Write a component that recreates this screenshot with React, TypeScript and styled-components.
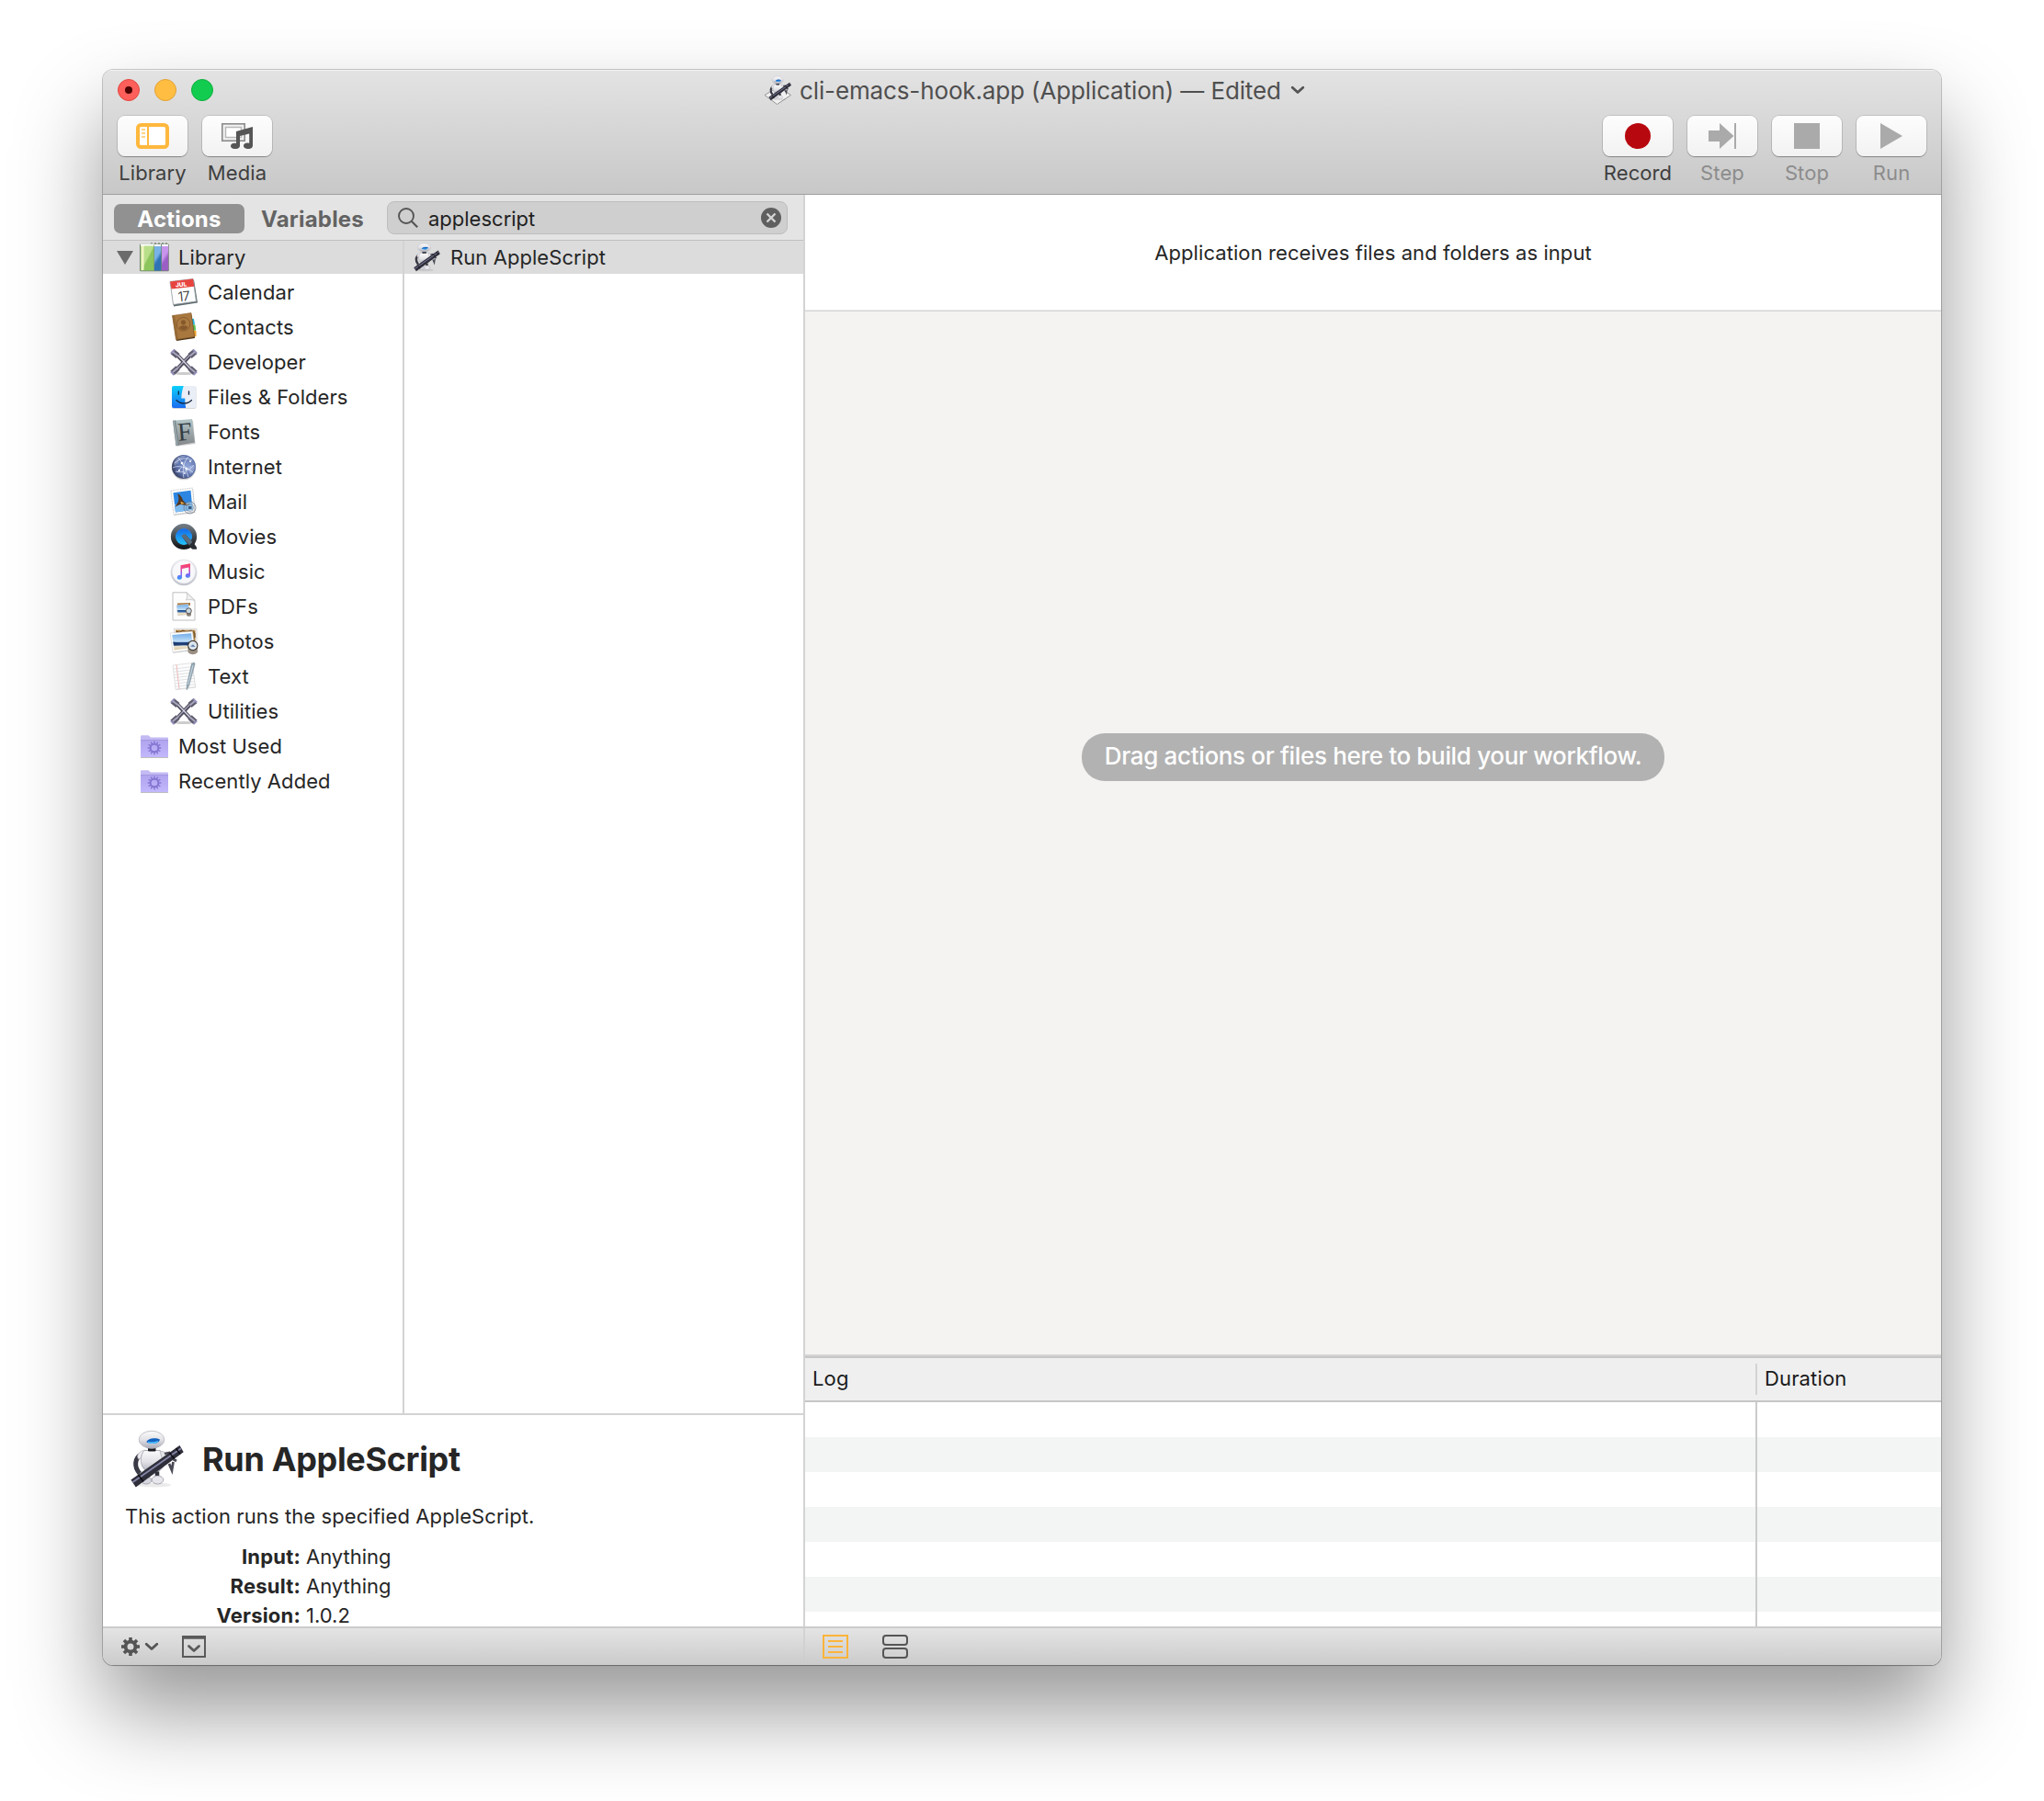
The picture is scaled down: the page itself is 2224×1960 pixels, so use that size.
import React from 'react';
import styled, { createGlobalStyle } from 'styled-components';

const GlobalStyle = createGlobalStyle`
  * { box-sizing: border-box; }
  html, body { margin: 0; padding: 0; background: #fff; }
  body { font-family: Inter, "Liberation Sans", sans-serif; font-size: 22px; color: #262626; overflow: hidden; }
  svg { display: block; flex: none; }
`;

/* ---------- window ---------- */

const Desktop = styled.div`
  width: 2224px;
  height: 1960px;
  padding: 76px 112px;
  background: #fff;
  overflow: hidden;
`;

const Window = styled.div`
  display: flex;
  flex-direction: column;
  width: 2000px;
  height: 1736px;
  border-radius: 11px;
  overflow: hidden;
  box-shadow: 0 0 0 1px rgba(0, 0, 0, 0.2), 0 1px 1px rgba(0, 0, 0, 0.2), 0 50px 94px rgba(0, 0, 0, 0.41);
`;

const Chrome = styled.header`
  height: 136px;
  background: linear-gradient(#e3e3e3, #c8c8c8);
  border-bottom: 1px solid #9e9e9e;
  box-shadow: inset 0 1px 0 #f2f2f2;
`;

const TitleBar = styled.div`
  display: flex;
  align-items: center;
  height: 44px;
  padding-left: 16px;
`;

const Lights = styled.div`
  display: flex;
  gap: 16px;
`;

const Light = styled.span<{ $fill: string; $rim: string }>`
  display: grid;
  place-items: center;
  width: 24px;
  height: 24px;
  border-radius: 50%;
  background: ${p => p.$fill};
  border: 1px solid ${p => p.$rim};
`;

const UnsavedDot = styled.span`
  width: 8px;
  height: 8px;
  border-radius: 50%;
  background: #4c0000;
`;

const Title = styled.div`
  display: flex;
  align-items: center;
  margin-left: 598px;
  font-size: 26px;
  letter-spacing: -0.13px;
  color: #4f4f4f;
  white-space: pre;
`;

const TitleText = styled.span`
  margin: 2px 10px 0 8px;
  line-height: 32px;
`;

const Toolbar = styled.div`
  display: flex;
  justify-content: space-between;
  padding: 6px 16px 0;
`;

const ToolGroup = styled.div`
  display: flex;
  gap: 16px;
`;

const Tool = styled.div<{ $dim?: boolean }>`
  display: flex;
  flex-direction: column;
  align-items: center;
  width: 76px;
  line-height: 24px;
  letter-spacing: 0.1px;
  color: ${p => (p.$dim ? '#8c8c8c' : '#3f3f3f')};
`;

const ToolButton = styled.div`
  display: grid;
  place-items: center;
  width: 76px;
  height: 44px;
  margin-bottom: 6px;
  border-radius: 8px;
  background: linear-gradient(#fdfdfd, #f2f2f2);
  box-shadow: 0 0 0 1px rgba(0, 0, 0, 0.11), 0 1px 1px rgba(0, 0, 0, 0.28);
`;

/* ---------- body ---------- */

const Body = styled.main`
  display: flex;
  flex: 1;
  min-height: 0;
  background: #fff;
`;

const LibraryPane = styled.section`
  display: flex;
  flex-direction: column;
  width: 764px;
  border-right: 2px solid #d3d3d3;
`;

const TabBar = styled.div`
  display: flex;
  align-items: flex-start;
  height: 50px;
  padding: 7px 0 0 12px;
  background: #e4e4e4;
  border-bottom: 1px solid #c1c1c1;
`;

const Tab = styled.div<{ $active?: boolean }>`
  width: ${p => (p.$active ? '142px' : 'auto')};
  height: 32px;
  margin-top: 3px;
  margin-left: ${p => (p.$active ? '0' : '18px')};
  border-radius: 7px;
  background: ${p => (p.$active ? '#919191' : 'none')};
  color: ${p => (p.$active ? '#fff' : '#636363')};
  font-size: 24px;
  font-weight: 700;
  line-height: 34px;
  letter-spacing: 0.2px;
  text-align: center;
`;

const SearchField = styled.div`
  display: flex;
  align-items: center;
  width: 436px;
  height: 36px;
  margin-left: auto;
  margin-right: 17px;
  padding: 0 6px 0 11px;
  border: 1px solid #bdbdbd;
  border-radius: 8px;
  background: #cfcfcf;
  color: #1f1f1f;
`;

const Query = styled.span`
  flex: 1;
  margin-left: 11px;
  padding-top: 1px;
`;

const Columns = styled.div`
  display: flex;
  flex: 1;
  min-height: 0;
`;

const Tree = styled.div`
  width: 328px;
  border-right: 2px solid #d3d3d3;
`;

const ActionList = styled.div`
  flex: 1;
`;

const Row = styled.div<{ $indent: number; $selected?: boolean }>`
  display: flex;
  align-items: center;
  gap: 10px;
  height: ${p => (p.$selected ? 36 : 38)}px;
  padding-top: ${p => (p.$selected ? 0 : 2)}px;
  padding-left: ${p => p.$indent}px;
  background: ${p => (p.$selected ? '#dcdcdc' : 'none')};
  letter-spacing: 0.07px;
  white-space: nowrap;
`;

const DisclosureBox = styled.span`
  margin-right: -3px;
`;

const Details = styled.div`
  height: 232px;
  padding: 16px 0 0 24px;
  border-top: 2px solid #d3d3d3;
  overflow: hidden;
`;

const DetailsHead = styled.div`
  display: flex;
  align-items: center;
  gap: 18px;
  height: 64px;
  padding-left: 2px;
`;

const DetailsTitle = styled.h1`
  margin: 0;
  font-size: 36px;
  font-weight: 700;
  line-height: 64px;
  letter-spacing: -0.33px;
`;

const Description = styled.p`
  margin: 14px 0 12px;
  line-height: 32px;
  letter-spacing: 0.1px;
`;

const Facts = styled.dl`
  display: grid;
  grid-template-columns: 191px auto;
  column-gap: 6px;
  margin: 0;
  line-height: 32px;
`;

const Term = styled.dt`
  font-weight: 700;
  letter-spacing: 0.2px;
  text-align: right;
`;

const Value = styled.dd`
  margin: 0;
`;

const WorkflowPane = styled.section`
  display: flex;
  flex-direction: column;
  flex: 1;
`;

const InputNote = styled.div`
  height: 127px;
  padding-top: 1px;
  line-height: 124px;
  text-align: center;
  letter-spacing: 0.08px;
  border-bottom: 1px solid #d6d6d6;
  box-shadow: inset 0 -1px 0 #e8e8e8;
`;

const Canvas = styled.div`
  display: flex;
  justify-content: center;
  align-items: flex-start;
  flex: 1;
  padding-top: 459px;
  background: #f4f3f2;
`;

const Hint = styled.div`
  width: 634px;
  height: 52px;
  border-radius: 25px;
  background: #b2b2b2;
  color: #fff;
  font-size: 26px;
  font-weight: 450;
  line-height: 49px;
  letter-spacing: -0.34px;
  text-align: center;
  white-space: nowrap;
`;

const LogTable = styled.div`
  display: flex;
  flex-direction: column;
  height: 296px;
  border-top: 2px solid #d4d4d4;
`;

const LogHeader = styled.div`
  display: flex;
  align-items: center;
  height: 50px;
  border-top: 2px solid #c6c6c6;
  border-bottom: 2px solid #c6c6c6;
  background: #efefef;
  color: #1a1a1a;
`;

const LogHeadCell = styled.div<{ $last?: boolean }>`
  flex: ${p => (p.$last ? '0 0 202px' : '1')};
  height: 34px;
  padding-left: 8px;
  line-height: 32px;
  letter-spacing: 0.14px;
  border-left: ${p => (p.$last ? '2px solid #d3d3d3' : '0')};
`;

const LogBody = styled.div`
  display: flex;
  justify-content: flex-end;
  flex: 1;
  background: repeating-linear-gradient(#fff 0 38px, #f3f5f5 38px 76px);
`;

const DurationColumn = styled.div`
  width: 202px;
  border-left: 2px solid #cbcbcb;
`;

/* ---------- bottom bar ---------- */

const BottomBar = styled.footer`
  display: flex;
  height: 42px;
  border-top: 2px solid #cccccc;
  background: linear-gradient(#e4e4e4, #cbcbcb);
`;

const BottomLeft = styled.div`
  display: flex;
  align-items: center;
  gap: 25px;
  width: 764px;
  padding-left: 20px;
  border-right: 2px solid rgba(205, 205, 205, 0.7);
`;

const GearMenu = styled.div`
  display: flex;
  align-items: center;
  gap: 5px;
`;

const BottomRight = styled.div`
  display: flex;
  align-items: center;
  gap: 37px;
  padding-left: 19px;
`;

/* ---------- glyphs ---------- */

const RobotShape = () => (
  <g>
    <ellipse cx="30" cy="60" rx="18" ry="2.500" fill="#000" opacity=".08" />
    <path d="M15.500 27C8.500 31 7.500 40 14 47.500" fill="none" stroke="#3a3a46" strokeWidth="5" />
    <path d="M11.500 29C12.500 24 17 21.500 22 22.500l-3 7-6.500 2.500z" fill="#ededf0" stroke="#aaaab4" strokeWidth=".6" />
    <path d="M19 22.500h17c5 4 6.500 11 4 17-3 5-7 7.500-12 7.500s-9.500-3-11.500-8c-2-6-1.500-12 2.500-16.500z" fill="url(#robotWhite)" stroke="#9a9aa8" strokeWidth=".8" />
    <path d="M36 23.500c4-.5 6.500 1.500 6.500 5l-4 3z" fill="#e3e3e8" stroke="#9a9aa8" strokeWidth=".6" />
    <rect x="23" y="19" width="8.500" height="4.500" rx="1" fill="#1c1c24" />
    <ellipse cx="27" cy="10.800" rx="13.800" ry="9.500" fill="url(#robotWhite)" stroke="#b4b4bd" strokeWidth=".8" />
    <path d="M21.300 13.500c1.500-4.300 10-5.300 14.600-3-.2 2.800-3 4.300-7 4.300-3 0-6-.3-7.600-1.300z" fill="#1463c0" />
    <path d="M23 13.600c3.500.8 8 .6 11-.9" stroke="#4dbbff" strokeWidth="1.600" fill="none" />
    <path d="M22 46.500v5M33 45.500v5" stroke="#30303a" strokeWidth="4.500" />
    <ellipse cx="21" cy="55" rx="6" ry="4" fill="#d6d6de" stroke="#8d8d9c" strokeWidth=".7" />
    <ellipse cx="33.500" cy="54.500" rx="6.300" ry="4.500" fill="#e6e6ec" stroke="#8d8d9c" strokeWidth=".7" />
    <path d="M41 26l5-1 2 5M46 37l3 7 1.500-9M50.500 32l3.500 2" fill="none" stroke="#4a4a56" strokeWidth="2.800" />
    <path d="M4.400 54.500L57.500 17l4.200 7.300L9.800 62.500z" fill="#2f2f3b" />
    <path d="M6.500 57L59 20.300" stroke="#8585a8" strokeWidth="1.800" />
    <path d="M12.500 49l5.500 7.500M46.500 25l5 6.500M53.500 20l4.500 6.500" stroke="#0c0c12" strokeWidth="1.400" />
  </g>
);

const PaintServer = styled.svg`
  width: 0;
  height: 0;
`;

const SharedPaint = () => (
  <PaintServer aria-hidden="true">
    <defs>
      <linearGradient id="robotWhite" x1="0" y1="0" x2="0" y2="1">
        <stop offset="0" stopColor="#fbfbfc" /><stop offset=".5" stopColor="#e2e2e7" /><stop offset="1" stopColor="#a9a9b8" />
      </linearGradient>
      <linearGradient id="bookGreen" x1="0" y1="0" x2="1" y2="1">
        <stop offset=".5" stopColor="#b8de8a" /><stop offset=".56" stopColor="#8cc55c" />
      </linearGradient>
      <linearGradient id="bookBlue" x1="0" y1="0" x2=".4" y2="1">
        <stop offset=".5" stopColor="#79b2e6" /><stop offset=".7" stopColor="#2f73b5" />
      </linearGradient>
      <linearGradient id="bookPurple" x1="0" y1="0" x2=".4" y2="1">
        <stop offset=".5" stopColor="#c795ec" /><stop offset=".7" stopColor="#9a5ec4" />
      </linearGradient>
      <linearGradient id="finderBlue" x1="0" y1="0" x2="0" y2="1">
        <stop offset="0" stopColor="#0bd0fb" /><stop offset="1" stopColor="#1a6cf0" />
      </linearGradient>
      <linearGradient id="fontBook" x1="0" y1="0" x2="0" y2="1">
        <stop offset="0" stopColor="#b4c6c9" /><stop offset="1" stopColor="#84878a" />
      </linearGradient>
      <radialGradient id="globe" cx=".65" cy=".45" r=".7">
        <stop offset="0" stopColor="#8ea4d8" /><stop offset=".6" stopColor="#5c70a8" /><stop offset="1" stopColor="#2f3552" />
      </radialGradient>
      <linearGradient id="quick" x1="0" y1="0" x2="0" y2="1">
        <stop offset="0" stopColor="#6d7780" /><stop offset="1" stopColor="#17191c" />
      </linearGradient>
      <linearGradient id="quickBlue" x1="0" y1="0" x2="0" y2="1">
        <stop offset="0" stopColor="#1567e6" /><stop offset="1" stopColor="#22c3fb" />
      </linearGradient>
      <linearGradient id="note" x1="0" y1="0" x2="0" y2="1">
        <stop offset="0" stopColor="#fb4060" /><stop offset=".35" stopColor="#e8489a" /><stop offset=".6" stopColor="#8d5cf2" /><stop offset="1" stopColor="#2f9ff7" />
      </linearGradient>
      <linearGradient id="musicRim" x1="0" y1="0" x2="0" y2="1">
        <stop offset="0" stopColor="#ececf2" /><stop offset="1" stopColor="#bfc2cb" />
      </linearGradient>
      <linearGradient id="sea" x1="0" y1="0" x2="0" y2="1">
        <stop offset="0" stopColor="#6fabea" /><stop offset=".5" stopColor="#c4e1f7" /><stop offset=".54" stopColor="#1f4a8d" /><stop offset=".68" stopColor="#3a6fae" /><stop offset=".76" stopColor="#eee4cf" /><stop offset="1" stopColor="#d9c9a6" />
      </linearGradient>
      <linearGradient id="folder" x1="0" y1="0" x2="0" y2="1">
        <stop offset="0" stopColor="#b0a4ee" /><stop offset="1" stopColor="#c2b8fc" />
      </linearGradient>
    </defs>
  </PaintServer>
);

const Robot = ({ size }: { size: number }) => (
  <svg width={size} height={size} viewBox="0 0 64 64"><RobotShape /></svg>
);

const DocumentRobot = () => (
  <svg width="32" height="32" viewBox="0 0 32 32">
    <path d="M2 21.500L17 12.500l13.500 9L15.500 31.500z" fill="#f1f1f1" stroke="#8a8a8a" strokeWidth=".9" />
    <g transform="translate(4.500 .4) scale(.43)"><RobotShape /></g>
  </svg>
);

const Icon32 = ({ children }: { children: React.ReactNode }) => (
  <svg width="32" height="32" viewBox="0 0 32 32">{children}</svg>
);

const BooksIcon = () => (
  <Icon32>
    <path d="M12 1h18" stroke="#7c8a7c" strokeWidth="1.600" strokeDasharray="2 2" />
    <rect x="0" y="1.500" width="31.800" height="29.700" rx="1" fill="#71856f" />
    <rect x="1" y="2.500" width="14.500" height="28" fill="url(#bookGreen)" />
    <rect x="2" y="3" width="2.600" height="27" fill="#eef3c0" />
    <rect x="16" y="3" width="7.300" height="27.500" fill="url(#bookBlue)" />
    <rect x="24" y="3" width="7.200" height="27.500" fill="url(#bookPurple)" />
    <path d="M1 2.500h14.500M16 3h7M24 3h7" stroke="#fff" strokeWidth="2" />
  </Icon32>
);

const CalendarIcon = () => (
  <Icon32>
    <path d="M2 5L27 2.500 31 27.500 5 31.500z" fill="#5f6b70" />
    <path d="M1 4.500L26 1.500 29.500 26 4.500 29.500z" fill="#fdfdfd" stroke="#8e979b" strokeWidth=".8" />
    <path d="M1 4.500L26 1.500 27.300 9.800 2.500 12.500z" fill="#e8443f" />
    <g transform="rotate(-6 15 16)">
      <text x="14" y="9.800" fontFamily="Inter, sans-serif" fontSize="6.500" fontWeight="800" fill="#fff" textAnchor="middle">JUL</text>
      <text x="15.500" y="25.800" fontFamily="Inter, sans-serif" fontSize="14.500" fontWeight="300" fill="#222" textAnchor="middle" letterSpacing="-.6">17</text>
    </g>
  </Icon32>
);

const ContactsIcon = () => (
  <Icon32>
    <path d="M24 6.500l3 .5 1 6-3 .5z" fill="#27b3dd" />
    <path d="M25 13l3.500.5.600 6-3.500.5z" fill="#58c252" />
    <path d="M26 19.500l3.500.5v6l-3 1z" fill="#f0a22b" />
    <path d="M4 5L24.500 2.500 28 28 8 31z" fill="#4e3517" />
    <path d="M3.500 3.500L24 .5 27.500 26.500 7.500 29.500z" fill="#a9783f" stroke="#8c6030" strokeWidth=".6" />
    <path d="M3.500 3.500l2.500-.4L10 29l-2.500.5z" fill="#956a35" />
    <circle cx="15.500" cy="12.800" r="7.300" fill="#ac7b43" stroke="#85592a" strokeWidth=".9" />
    <circle cx="15.500" cy="10.800" r="2.600" fill="#85592a" />
    <path d="M10.800 17c1-3.500 8.500-3.800 9.700-.6-2 3.200-7.500 3.400-9.700.6z" fill="#85592a" />
  </Icon32>
);

const ToolsIcon = () => (
  <Icon32>
    <ellipse cx="16" cy="28.500" rx="10" ry="1.600" fill="#000" opacity=".2" />
    <path d="M7 6.500L25.500 26M25 6.500L6.500 26" stroke="#4d4b5c" strokeWidth="4" />
    <path d="M24 7L7 25" stroke="#a5a4b6" strokeWidth="1.300" />
    <path d="M8 7L25 25" stroke="#d5d4e2" strokeWidth="1.500" />
    <path d="M3.500 4.500L9.500 9.500M28.500 4.500L22.500 9.500M3.500 28L9.500 22.500M28.500 28L22.500 22.500" stroke="#5f5d70" strokeWidth="6.400" />
    <path d="M2 6.500l4-4M30 6.500l-4-4M2 26.500l3.500 3.500M30 26.500L26.500 30" stroke="#8f8bb8" strokeWidth="2" />
    <path d="M4 5l6 4.500M28 5l-5.500 4.500M4 27l6-5M28 27l-6-5" stroke="#a9a8bd" strokeWidth="1.800" />
  </Icon32>
);

const FinderIcon = () => (
  <Icon32>
    <rect x="3" y="4.600" width="26.500" height="24.200" rx="2" fill="#000" opacity=".2" />
    <rect x="3" y="4" width="26.500" height="24" rx="2" fill="#e9eef7" />
    <path d="M5 4h10.800c-1.500 4-2.300 8.500-2.500 13.500h4c-.1 3.500.2 7 .9 10.500H5a2 2 0 0 1-2-2V6a2 2 0 0 1 2-2z" fill="url(#finderBlue)" />
    <path d="M10.300 10v3.200M21.500 10v3.200" stroke="#16263e" strokeWidth="1.300" strokeLinecap="round" />
    <path d="M8 19.500c4.500 4.600 12 4.600 16.500 0" fill="none" stroke="#16263e" strokeWidth="1.200" strokeLinecap="round" />
  </Icon32>
);

const FontsIcon = () => (
  <Icon32>
    <path d="M5 5L26 3.500 28.500 29 8 31.800z" fill="#000" opacity=".2" />
    <path d="M4 3.700L25 2 28 27.500 7.500 31z" fill="url(#fontBook)" />
    <path d="M4 3.700l3.200-.3L10.800 30.500 7.500 31z" fill="#7b898d" />
    <path d="M5.200 4L8.800 30.500" stroke="#b7c6ca" strokeWidth=".8" />
    <text x="17" y="25" transform="rotate(-5 17 16)" fontFamily="'Liberation Serif', serif" fontSize="28" fill="#343d42" textAnchor="middle">F</text>
  </Icon32>
);

const InternetIcon = () => (
  <Icon32>
    <circle cx="16" cy="17" r="13.300" fill="#000" opacity=".18" />
    <circle cx="16" cy="16" r="13" fill="url(#globe)" />
    <path d="M5 12c2-6 8-9 14-8-3 1-4 3-8 4l-1 4-4 3zM20 17c2-3 6-3 8-2-.5 5-2 7-5 9-2-2-1-5-3-7z" fill="#dfe7ff" opacity=".3" />
    <path d="M6 12c5-5 13-7 19-3M7 21c7 2 14 0 20-7M10 6c4 5 9 14 11 21M21 5c-5 5-7 14-5 23M4 17c6-3 14-1 22 5M13 12l7 6M9 22l5-6" fill="none" stroke="#e8eeff" strokeWidth=".8" opacity=".85" />
    <g fill="#fff"><circle cx="14" cy="12" r="1.300" /><circle cx="19" cy="18" r="1.300" /><circle cx="23" cy="10" r="1" /><circle cx="11" cy="20" r="1" /><circle cx="17" cy="23" r=".9" /></g>
  </Icon32>
);

const MailIcon = () => (
  <Icon32>
    <path d="M2 5L26 2 28.500 28 5.500 31z" fill="#000" opacity=".2" />
    <path d="M1.800 4L25.500 1 28 27 5 30z" fill="#fbfbfb" stroke="#b4b4b4" strokeWidth=".7" strokeDasharray="1.500 1" />
    <path d="M4.500 6.200L23.500 3.800 25.500 24.800 7 27.500z" fill="#2c86e2" />
    <path d="M6 19l19.300-3 .4 8.800L7 27.500z" fill="#7fbcf0" />
    <path d="M9 7.500c3 .5 5 3.500 6 7l3 3 4.500 1.500-3 1.300-4-.8-3.500-.5-5.500 2.500 3.500-5.500c.8-3 .5-6-1-8.500z" fill="#54361c" />
    <path d="M12.500 15.500l4.500 2.500-4 .8z" fill="#e9b050" />
    <path d="M18.500 18l3 1.300-2.500.2z" fill="#fff" />
    <circle cx="22.500" cy="22.500" r="6.500" fill="#9fb6cc" fillOpacity=".3" stroke="#65707d" strokeWidth="1" opacity=".65" />
    <circle cx="22.500" cy="22.500" r="4" fill="none" stroke="#65707d" strokeWidth=".8" opacity=".6" />
    <rect x="21" y="21" width="3.500" height="3" fill="#3b5d80" />
  </Icon32>
);

const MoviesIcon = () => (
  <Icon32>
    <circle cx="16" cy="16" r="11.300" fill="none" stroke="url(#quick)" strokeWidth="5.600" />
    <circle cx="16" cy="16" r="9" fill="url(#quickBlue)" />
    <path d="M14.500 16.500l2.800-3L26 22l4 5.500v2.300h-4.500l-3-2.300z" fill="#2b2f34" />
    <path d="M13.500 15.500c1-2 3-2.500 4.500-1.500l7.500 7.800-3.500 3.500z" fill="#5d6c7a" />
  </Icon32>
);

const MusicIcon = () => (
  <Icon32>
    <circle cx="16" cy="16.800" r="14.400" fill="url(#musicRim)" />
    <circle cx="16" cy="16.300" r="12.600" fill="#f8f8fb" stroke="#e0e1e8" strokeWidth=".6" />
    <path d="M12.500 9.200L23 7.200V20.500a2.600 2.400 0 1 1-1.600-2.300V11.600L14 13v9.500a2.600 2.400 0 1 1-1.500-2.300z" fill="url(#note)" />
  </Icon32>
);

const PdfIcon = () => (
  <Icon32>
    <path d="M4 .8h15L28 9.500V31H4z" fill="#fdfdfd" stroke="#b9b9b9" strokeWidth=".9" />
    <path d="M19 .8c1 3 .5 6-.5 8.200 3-.6 6.500-.5 9.500.5z" fill="#efefef" stroke="#bcbcbc" strokeWidth=".7" />
    <path d="M9 12.500l14-.5v3H9z" fill="#a9783c" />
    <path d="M8 14.700l13-1.200 1.500 11-13 1.500z" fill="url(#sea)" stroke="#ddd" strokeWidth=".5" />
    <rect x="19" y="22" width="5" height="4.800" rx="2" fill="#8a8075" />
    <circle cx="21.300" cy="20.800" r="3" fill="#c9d6e2" stroke="#5a5550" strokeWidth="1" />
  </Icon32>
);

const PhotosIcon = () => (
  <Icon32>
    <path d="M5.500 2.200h24.500v20H5.500z" fill="#fff" stroke="#bdbdbd" strokeWidth=".7" />
    <path d="M7 3.600h21.500v17H7z" fill="#b07f3e" />
    <path d="M8 5l3 1.500 4-2.500 4 2 5-2 4 3v5" stroke="#5e4018" strokeWidth="1" fill="none" />
    <path d="M1.500 7.700L26 5.200 28.500 25.500 4.500 28.700z" fill="#000" opacity=".25" />
    <path d="M1 6.900L25.500 5 28 24.700 4 27.900z" fill="#fdfdfd" stroke="#c6c6c6" strokeWidth=".5" />
    <path d="M3.300 9L24 7.200 26 22.800 5.500 25.500z" fill="url(#sea)" />
    <path d="M4.500 16.500l8 1.500 11-1.500.8 4-8-.5-11 .8z" fill="#1d3768" opacity=".85" />
    <path d="M20.500 23H31v4.500c-2 3.500-8.500 3.500-10.500 0z" fill="#9a8f84" />
    <circle cx="25.800" cy="20.500" r="5" fill="#d5e2ee" stroke="#3b3835" strokeWidth="1.300" />
    <circle cx="25.800" cy="20.500" r="4" fill="none" stroke="#f4f4f4" strokeWidth="1" />
    <path d="M23 21.500l3-2 2.500 2.500z" fill="#577ba6" />
  </Icon32>
);

const TextIcon = () => (
  <Icon32>
    <path d="M4.500 4.500L25.500 2 29 28.500 7.500 31z" fill="#000" opacity=".14" />
    <path d="M4 4L25 1.500 28.500 27.700 7 30.200z" fill="#fdfdfd" stroke="#cfcfcf" strokeWidth=".6" />
    <path d="M8 3.500L11 29.800" stroke="#f4b3b3" strokeWidth="1" />
    <path d="M5 8l20-2.400M5.300 11.200l20-2.400M5.700 14.400l20-2.400M6 17.600L26 15.200M6.500 20.800l20-2.400M6.800 24l20-2.400M7 27.200l20.500-2.400" stroke="#d2d6da" strokeWidth=".7" />
    <path d="M24.500 2.300l2.600-1.300 1 1.300-6.300 23.500-2.600 5 .1-5.500z" fill="#93a8b5" stroke="#6d7f8a" strokeWidth=".5" />
    <path d="M26 4l-5.500 21" stroke="#d7e3ea" strokeWidth=".8" />
  </Icon32>
);

interface TeethProps { cx: number; cy: number; r: number; n: number; w: number; h: number; color: string }

const GearTeeth = ({ cx, cy, r, n, w, h, color }: TeethProps) => (
  <g fill={color}>
    {Array.from({ length: n }, (_, i) => (
      <rect key={i} x={cx - w / 2} y={cy - r} width={w} height={h} transform={`rotate(${(360 / n) * i} ${cx} ${cy})`} />
    ))}
  </g>
);

const FolderIcon = () => (
  <Icon32>
    <path d="M1 5.500a1.300 1.300 0 0 1 1.300-1.300h7.200l2.500 2.300h18a1 1 0 0 1 1 1V27.500H1z" fill="#c3baf3" />
    <path d="M1 28.500h30" stroke="#000" strokeOpacity=".25" strokeWidth="1" />
    <path d="M1 9.500h30V27a1 1 0 0 1-1 1H2a1 1 0 0 1-1-1z" fill="url(#folder)" />
    <path d="M1 9.500h30" stroke="#9d90dd" strokeWidth=".8" />
    <circle cx="16" cy="18" r="4.300" fill="none" stroke="#8576d2" strokeWidth="2" />
    <GearTeeth cx={16} cy={18} r={7.4} n={12} w={1.5} h={2.8} color="#8576d2" />
  </Icon32>
);

const Disclosure = () => (
  <svg width="18" height="16" viewBox="0 0 18 16"><path d="M0 1h18L9 16z" fill="#6b6b6b" /></svg>
);

const Chevron = () => (
  <svg width="16" height="10" viewBox="0 0 16 10">
    <path d="M2.200 2.200L8 7.500l5.800-5.300" fill="none" stroke="#545454" strokeWidth="2.800" strokeLinecap="round" strokeLinejoin="round" />
  </svg>
);

const SidebarGlyph = () => (
  <svg width="36" height="28" viewBox="0 0 36 28">
    <rect x="2" y="2" width="32" height="24" rx="3.500" fill="#fff" stroke="#ffb83d" strokeWidth="4" />
    <rect x="12" y="3" width="2" height="22" fill="#ffb83d" />
    <path d="M6 7h4M6 11h4M6 15h4" stroke="#ffd488" strokeWidth="2" />
  </svg>
);

const MediaGlyph = () => (
  <svg width="36" height="28" viewBox="0 0 36 28">
    <rect x="1.800" y=".8" width="24.400" height="18.400" fill="#f2f2f2" stroke="#8e8e8e" strokeWidth="1.700" />
    <rect x="5.500" y="4.500" width="17" height="11" fill="#fff" stroke="#b9b9b9" strokeWidth="1.500" />
    <path d="M17 9l18-5v20.500c0 5-10 4.500-10 .3 0-2.800 3.500-3.800 6.200-2.800V11.500L21 14v10.700c0 4.600-10 4.300-10 .2 0-2.700 3.300-3.700 6-2.900z" fill="#555" />
  </svg>
);

const RecordGlyph = () => (
  <svg width="28" height="28"><circle cx="14" cy="14" r="14" fill="#b8080f" /></svg>
);
const StepGlyph = () => (
  <svg width="32" height="28"><path d="M1 8h12V0l15.500 14L13 28v-8H1zM29 0h2v28h-2z" fill="#aaa" /></svg>
);
const StopGlyph = () => (
  <svg width="28" height="28"><rect width="28" height="28" fill="#aaa" /></svg>
);
const RunGlyph = () => (
  <svg width="24" height="28"><path d="M0 0l24 14L0 28z" fill="#aaa" /></svg>
);

const SearchGlyph = () => (
  <svg width="22" height="22" viewBox="0 0 22 22">
    <circle cx="9" cy="9" r="8" fill="none" stroke="#555" strokeWidth="1.900" />
    <path d="M14.800 14.800l6.400 6.400" stroke="#555" strokeWidth="2.200" />
  </svg>
);

const ClearGlyph = () => (
  <svg width="22" height="22" viewBox="0 0 22 22">
    <circle cx="11" cy="11" r="11" fill="#5f5f5f" />
    <path d="M6.500 6.500l9 9M15.500 6.500l-9 9" stroke="#d4d4d4" strokeWidth="2.400" />
  </svg>
);

const GearGlyph = () => (
  <svg width="20" height="20" viewBox="0 0 20 20">
    <circle cx="10" cy="10" r="5.400" fill="none" stroke="#545454" strokeWidth="3.800" />
    <GearTeeth cx={10} cy={10} r={10} n={8} w={3.6} h={4} color="#545454" />
  </svg>
);

const DrawerGlyph = () => (
  <svg width="26" height="24" viewBox="0 0 26 24">
    <path d="M1 1h24v22H1z" fill="none" stroke="#5a5a5a" strokeWidth="2" />
    <path d="M1 2h24" stroke="#5a5a5a" strokeWidth="3.600" />
    <path d="M7.500 11.500L13 16.500l5.500-5" fill="none" stroke="#5a5a5a" strokeWidth="2.800" strokeLinecap="round" strokeLinejoin="round" />
  </svg>
);

const LogGlyph = () => (
  <svg width="28" height="26" viewBox="0 0 28 26">
    <rect x="1" y="1" width="26" height="24" fill="none" stroke="#ffb43a" strokeWidth="2" />
    <path d="M6 7h16M6 13h16M6 19h16" stroke="#ffb43a" strokeWidth="2" />
  </svg>
);

const VariablesGlyph = () => (
  <svg width="28" height="26" viewBox="0 0 28 26">
    <rect x="1" y="1" width="26" height="10" rx="3" fill="none" stroke="#555" strokeWidth="2" />
    <rect x="1" y="15" width="26" height="10" rx="3" fill="none" stroke="#555" strokeWidth="2" />
  </svg>
);

/* ---------- data ---------- */

const categories: [string, React.FC][] = [
  ['Calendar', CalendarIcon],
  ['Contacts', ContactsIcon],
  ['Developer', ToolsIcon],
  ['Files & Folders', FinderIcon],
  ['Fonts', FontsIcon],
  ['Internet', InternetIcon],
  ['Mail', MailIcon],
  ['Movies', MoviesIcon],
  ['Music', MusicIcon],
  ['PDFs', PdfIcon],
  ['Photos', PhotosIcon],
  ['Text', TextIcon],
  ['Utilities', ToolsIcon],
];

const smartGroups = ['Most Used', 'Recently Added'];

const runTools: [string, React.FC, boolean][] = [
  ['Record', RecordGlyph, false],
  ['Step', StepGlyph, true],
  ['Stop', StopGlyph, true],
  ['Run', RunGlyph, true],
];

const facts = [['Input:', 'Anything'], ['Result:', 'Anything'], ['Version:', '1.0.2']];

export default function App() {
  return (
    <>
      <GlobalStyle />
      <Desktop>
        <Window>
          <Chrome>
            <TitleBar>
              <Lights>
                <Light $fill="#ff5f5a" $rim="#e2463f"><UnsavedDot /></Light>
                <Light $fill="#ffbe41" $rim="#e1a034" />
                <Light $fill="#12cc50" $rim="#0fae3c" />
              </Lights>
              <Title>
                <DocumentRobot />
                <TitleText>cli-emacs-hook.app (Application) — Edited</TitleText>
                <Chevron />
              </Title>
            </TitleBar>
            <Toolbar>
              <ToolGroup>
                <Tool><ToolButton><SidebarGlyph /></ToolButton>Library</Tool>
                <Tool><ToolButton><MediaGlyph /></ToolButton>Media</Tool>
              </ToolGroup>
              <ToolGroup>
                {runTools.map(([label, Glyph, dim]) => (
                  <Tool key={label} $dim={dim}><ToolButton><Glyph /></ToolButton>{label}</Tool>
                ))}
              </ToolGroup>
            </Toolbar>
          </Chrome>

          <Body>
            <LibraryPane>
              <TabBar>
                <Tab $active>Actions</Tab>
                <Tab>Variables</Tab>
                <SearchField>
                  <SearchGlyph />
                  <Query>applescript</Query>
                  <ClearGlyph />
                </SearchField>
              </TabBar>
              <Columns>
                <Tree>
                  <Row $indent={15} $selected>
                    <DisclosureBox><Disclosure /></DisclosureBox>
                    <BooksIcon />
                    Library
                  </Row>
                  {categories.map(([name, Glyph]) => (
                    <Row key={name} $indent={72}><Glyph />{name}</Row>
                  ))}
                  {smartGroups.map(name => (
                    <Row key={name} $indent={40}><FolderIcon />{name}</Row>
                  ))}
                </Tree>
                <ActionList>
                  <Row $indent={8} $selected><Robot size={32} />Run AppleScript</Row>
                </ActionList>
              </Columns>
              <Details>
                <DetailsHead>
                  <Robot size={64} />
                  <DetailsTitle>Run AppleScript</DetailsTitle>
                </DetailsHead>
                <Description>This action runs the specified AppleScript.</Description>
                <Facts>
                  {facts.map(([term, value]) => (
                    <React.Fragment key={term}><Term>{term}</Term><Value>{value}</Value></React.Fragment>
                  ))}
                </Facts>
              </Details>
            </LibraryPane>

            <WorkflowPane>
              <InputNote>Application receives files and folders as input</InputNote>
              <Canvas>
                <Hint>Drag actions or files here to build your workflow.</Hint>
              </Canvas>
              <LogTable>
                <LogHeader>
                  <LogHeadCell>Log</LogHeadCell>
                  <LogHeadCell $last>Duration</LogHeadCell>
                </LogHeader>
                <LogBody><DurationColumn /></LogBody>
              </LogTable>
            </WorkflowPane>
          </Body>

          <BottomBar>
            <BottomLeft>
              <GearMenu>
                <GearGlyph />
                <Chevron />
              </GearMenu>
              <DrawerGlyph />
            </BottomLeft>
            <BottomRight>
              <LogGlyph />
              <VariablesGlyph />
            </BottomRight>
          </BottomBar>
        </Window>
      </Desktop>
      <SharedPaint />
    </>
  );
}
